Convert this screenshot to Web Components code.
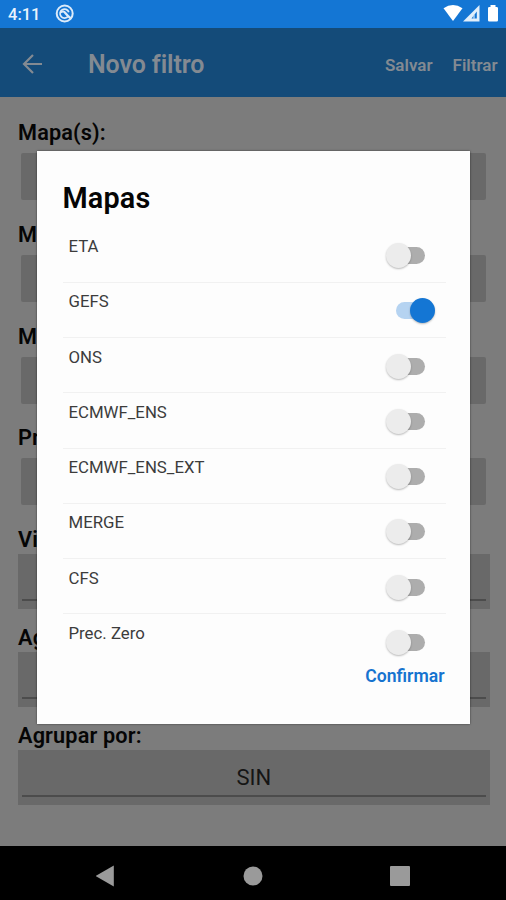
<!DOCTYPE html>
<html lang="pt-BR">
<head>
<meta charset="utf-8">
<title>Novo filtro</title>
<style>
html, body { margin: 0; height: 100%; }
body { font-family: Roboto, "Liberation Sans", sans-serif; background: #000; overflow: hidden; }
</style>
</head>
<body>
<filter-screen></filter-screen>
<script>
const define = (name, html, setup) => customElements.define(name, class extends HTMLElement {
  constructor() {
    super();
    const t = document.createElement('template');
    t.innerHTML = html;
    this.attachShadow({ mode: 'open' }).appendChild(t.content.cloneNode(true));
    if (setup) setup(this);
  }
});

define('status-bar', `
<style>
:host { display: flex; align-items: center; height: 28px; box-sizing: border-box; padding: 0 7px 0 8px; background: #1476d4; color: #e9f3fd; font-size: 16.5px; font-weight: 500; }
.time { width: 47px; line-height: 28px; padding-top: 1px; box-sizing: border-box; }
.space { flex: 1; }
svg { display: block; }
</style>
<span class="time">4:11</span>
<svg width="20" height="20" viewBox="0 0 20 20" fill="none" stroke="#dcebfa"><circle cx="9.7" cy="9.5" r="8" stroke-width="2"/><path d="M13.2 12.2A4.5 4.5 0 1 1 13.8 8.2" stroke-width="1.7"/><path d="M5.8 8.4Q8.3 6.3 10.3 9T16.4 14.9" stroke-width="2.2"/></svg>
<span class="space"></span>
<svg width="56" height="20" viewBox="0 0 56 20"><path d="M.5 4.2Q10 -2.4 19.5 4.2L10 17Z" fill="#fff"/><path d="M20 17.5 36.5 1V17.5Z" fill="#e2effb"/><path d="M28.5 14.5 33.8 7.5V14.5Z" fill="#1476d4"/><path d="M31 14.7V10.5" stroke="#d4e6f8" stroke-width="1.2"/><path d="M47.5 1h5v2h1.2q1.3 0 1.3 1.3v12q0 1.2-1.3 1.2h-7.4q-1.3 0-1.3-1.2v-12q0-1.3 1.3-1.3h1.2z" fill="#fff"/></svg>`);

define('app-bar', `
<style>
:host { display: flex; align-items: center; height: 69px; box-sizing: border-box; padding: 4px 8.5px 0 22px; background: #144b79; color: #838a92; font-weight: 500; }
svg { display: block; width: 22px; margin-right: 44px; }
h1 { margin: 0; flex: 1; font-size: 25px; font-weight: 600; letter-spacing: -.1px; line-height: 34px; }
.actions { display: flex; gap: 20px; font-size: 17px; font-weight: 600; }
</style>
<svg height="22" viewBox="0 0 22 22" fill="none" stroke="currentColor" stroke-width="2.2"><path d="M20 10H2.5M11 1 2 10 11 19"/></svg>
<h1><slot></slot></h1>
<div class="actions"><slot name="action"></slot></div>`);

define('form-field', `
<style>
:host { display: block; height: 101.8px; color: #050505; }
label { display: block; height: 32px; line-height: 24px; font-size: 21.7px; font-weight: 600; letter-spacing: .15px; }
.box { display: flex; align-items: center; justify-content: center; box-sizing: border-box; height: 47px; margin: 0 3.5px 0 3px; border-radius: 2px; background: #696969; font-size: 22px; color: #151515; }
:host([entry]) { height: 98px; }
:host([entry]) label { height: 26px; }
:host([entry]) .box { position: relative; height: 55px; margin: 0; border-radius: 0; }
:host([entry]) .box::after { content: ""; position: absolute; left: 4px; right: 4px; bottom: 8.5px; height: 2px; background: #4c4c4c; }
</style>
<label></label><div class="box"><slot></slot></div>`, el => {
  el.shadowRoot.querySelector('label').textContent = el.getAttribute('label');
});

define('toggle-switch', `
<style>
:host { display: flex; align-items: center; position: relative; width: 39px; height: 26px; }
.track { width: 35px; height: 17px; margin-left: 4px; border-radius: 9px; background: #adadad; }
.thumb { position: absolute; left: 0; top: .5px; width: 25px; height: 25px; border-radius: 50%; background: #ececec; box-shadow: 0 1px 2px #0004; }
:host([on]) .track { margin: 0 0 0 10px; background: #b5d3f1; }
:host([on]) .thumb { left: 24px; background: #1476d4; }
</style>
<div class="track"></div><div class="thumb"></div>`);

define('map-option', `
<style>
:host { display: flex; justify-content: space-between; box-sizing: border-box; height: 55.25px; padding: 8.5px 21px 0 6px; border-bottom: 1px solid #f1f1f1; color: #3c3c3c; font-size: 16.8px; line-height: 20px; }
:host(:last-of-type) { border-color: transparent; }
toggle-switch { margin-top: 6.5px; }
</style>
<span><slot></slot></span><toggle-switch></toggle-switch>`, el => {
  if (el.hasAttribute('on')) el.shadowRoot.querySelector('toggle-switch').setAttribute('on', '');
});

define('map-dialog', `
<style>
:host { display: block; box-sizing: border-box; width: 433px; height: 572.5px; padding: 29px 23.5px 0 26px; background: #fdfdfd; box-shadow: 0 0 2px #0008; }
h2 { margin: 0; height: 47.5px; line-height: 36px; font-size: 28.8px; font-weight: 600; letter-spacing: .15px; color: #050505; }
button { display: block; margin: -4.5px 1.5px 0 auto; padding: 0; border: 0; background: none; font: 600 17.6px/22px Roboto, sans-serif; color: #1673cf; }
</style>
<h2>Mapas</h2>
<div>
<map-option>ETA</map-option><map-option on>GEFS</map-option><map-option>ONS</map-option><map-option>ECMWF_ENS</map-option><map-option>ECMWF_ENS_EXT</map-option><map-option>MERGE</map-option><map-option>CFS</map-option><map-option>Prec. Zero</map-option>
</div>
<button>Confirmar</button>`);

define('nav-bar', `
<style>
:host { display: flex; justify-content: center; align-items: center; gap: 127px; height: 54px; background: #000; }
svg { display: block; width: 20px; height: 22px; fill: #9a9a9a; margin-top: 5px; }
</style>
<svg viewBox="0 0 20 22"><path d="M-.5 11 17.8 .5V21.5Z" /></svg>
<svg viewBox="0 0 20 22"><circle cx="10" cy="11" r="9.5"/></svg>
<svg viewBox="0 0 20 22"><rect y="1" width="20" height="20" rx="1"/></svg>`);

define('filter-screen', `
<style>
:host { display: grid; grid-template-rows: 28px 69px 749px 54px; width: 506px; height: 900px; position: relative; overflow: hidden; }
main { box-sizing: border-box; padding: 24px 16.5px 0 18px; background: #7c7c7c; overflow: hidden; }
map-dialog { position: absolute; left: 36.5px; top: 151px; }
</style>
<status-bar></status-bar>
<app-bar>Novo filtro<span slot="action">Salvar</span><span slot="action">Filtrar</span></app-bar>
<main>
<form-field label="Mapa(s):"></form-field>
<form-field label="M"></form-field>
<form-field label="M"></form-field>
<form-field label="Pr"></form-field>
<form-field entry label="Vi"></form-field>
<form-field entry label="Ag"></form-field>
<form-field entry label="Agrupar por:">SIN</form-field>
</main>
<nav-bar></nav-bar>
<map-dialog></map-dialog>`);
</script>
</body>
</html>
